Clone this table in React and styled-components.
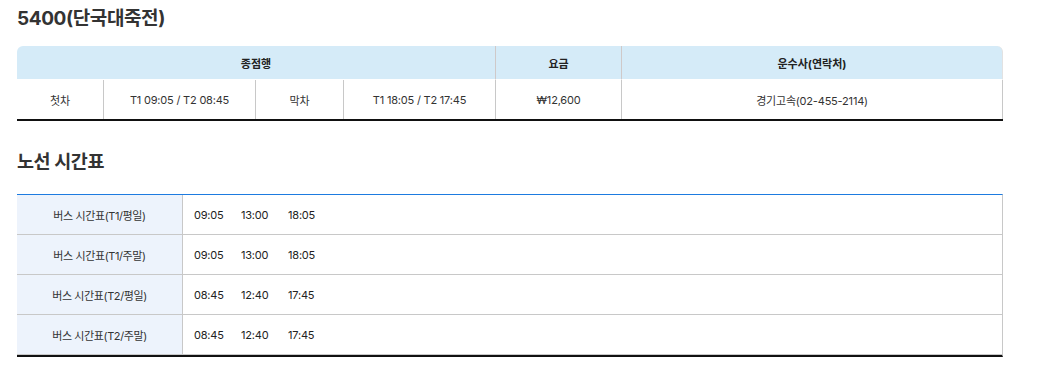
import React from 'react'
import styled, { createGlobalStyle } from 'styled-components'

const GlobalStyle = createGlobalStyle`
  html, body {
    margin: 0;
    padding: 0;
    background: #fff;
  }
  body {
    font-family: Inter, "Noto Sans CJK KR", "Noto Sans", sans-serif;
    color: #333;
  }
`

const Page = styled.div`
  width: 986px;
  padding: 0 0 0 17px;
`

const Title = styled.h2`
  margin: 0;
  padding-top: ${props => props.top}px;
  font-size: ${props => props.size}px;
  line-height: 27px;
  font-weight: 700;
  color: #333;
  letter-spacing: -0.4px;
`

const InfoTable = styled.div`
  margin-top: ${props => props.top}px;
  display: grid;
  grid-template-columns: 87px 152px 88px 152px 126px 381px;
  border-bottom: 2px solid #111;
`

const HeadCell = styled.div`
  grid-column: span ${props => props.span || 1};
  height: 33px;
  display: flex;
  align-items: center;
  justify-content: center;
  background: #d5ebf8;
  font-size: 11px;
  font-weight: 700;
  color: #222;
  border-right: 1px solid ${props => (props.last ? '#e2e2e2' : '#cfc9c9')};
  border-bottom: 1px solid #fff;
  border-top-left-radius: ${props => (props.first ? '6px' : '0')};
  border-top-right-radius: ${props => (props.last ? '6px' : '0')};
`

const BodyCell = styled.div`
  height: 39px;
  display: flex;
  align-items: center;
  justify-content: center;
  font-size: 11px;
  letter-spacing: -0.2px;
  color: #333;
  border-right: 1px solid #c8c8c8;
`

const RouteTable = styled.div`
  margin-top: 19px;
  display: grid;
  grid-template-columns: 166px 1fr;
  border-top: 1px solid #1d7be0;
  border-right: 1px solid #c8c8c8;
  border-bottom: 2px solid #111;
`

const RowLabel = styled.div`
  height: 39px;
  display: flex;
  align-items: center;
  justify-content: center;
  background: #edf3fc;
  font-size: 11px;
  letter-spacing: -0.4px;
  color: #333;
  border-right: 1px solid #c8c8c8;
  border-bottom: 1px solid #c8c8c8;
`

const Times = styled.div`
  height: 39px;
  display: flex;
  align-items: center;
  gap: 19px;
  padding-left: 11px;
  font-size: 11px;
  letter-spacing: -0.2px;
  color: #222;
  border-bottom: 1px solid #c8c8c8;
`

const Time = styled.span`
  width: 28px;
`

const schedule = [
  { label: '버스 시간표(T1/평일)', times: ['09:05', '13:00', '18:05'] },
  { label: '버스 시간표(T1/주말)', times: ['09:05', '13:00', '18:05'] },
  { label: '버스 시간표(T2/평일)', times: ['08:45', '12:40', '17:45'] },
  { label: '버스 시간표(T2/주말)', times: ['08:45', '12:40', '17:45'] },
]

const App = () => {
  return (
    <Page>
      <GlobalStyle />
      <Title size={19} top={5}>5400(단국대죽전)</Title>

      {/* 첫차 / 막차 / 요금 */}
      <InfoTable top={14}>
        <HeadCell span={4} first>종점행</HeadCell>
        <HeadCell>요금</HeadCell>
        <HeadCell last>운수사(연락처)</HeadCell>

        <BodyCell>첫차</BodyCell>
        <BodyCell>T1 09:05 / T2 08:45</BodyCell>
        <BodyCell>막차</BodyCell>
        <BodyCell>T1 18:05 / T2 17:45</BodyCell>
        <BodyCell>₩12,600</BodyCell>
        <BodyCell>경기고속(02-455-2114)</BodyCell>
      </InfoTable>

      <Title size={18.5} top={27}>노선 시간표</Title>

      {/* 노선 시간표 */}
      <RouteTable>
        {schedule.map(row => (
          <React.Fragment key={row.label}>
            <RowLabel>{row.label}</RowLabel>
            <Times>
              {row.times.map(t => <Time key={t}>{t}</Time>)}
            </Times>
          </React.Fragment>
        ))}
      </RouteTable>
    </Page>
  )
}

export default App
